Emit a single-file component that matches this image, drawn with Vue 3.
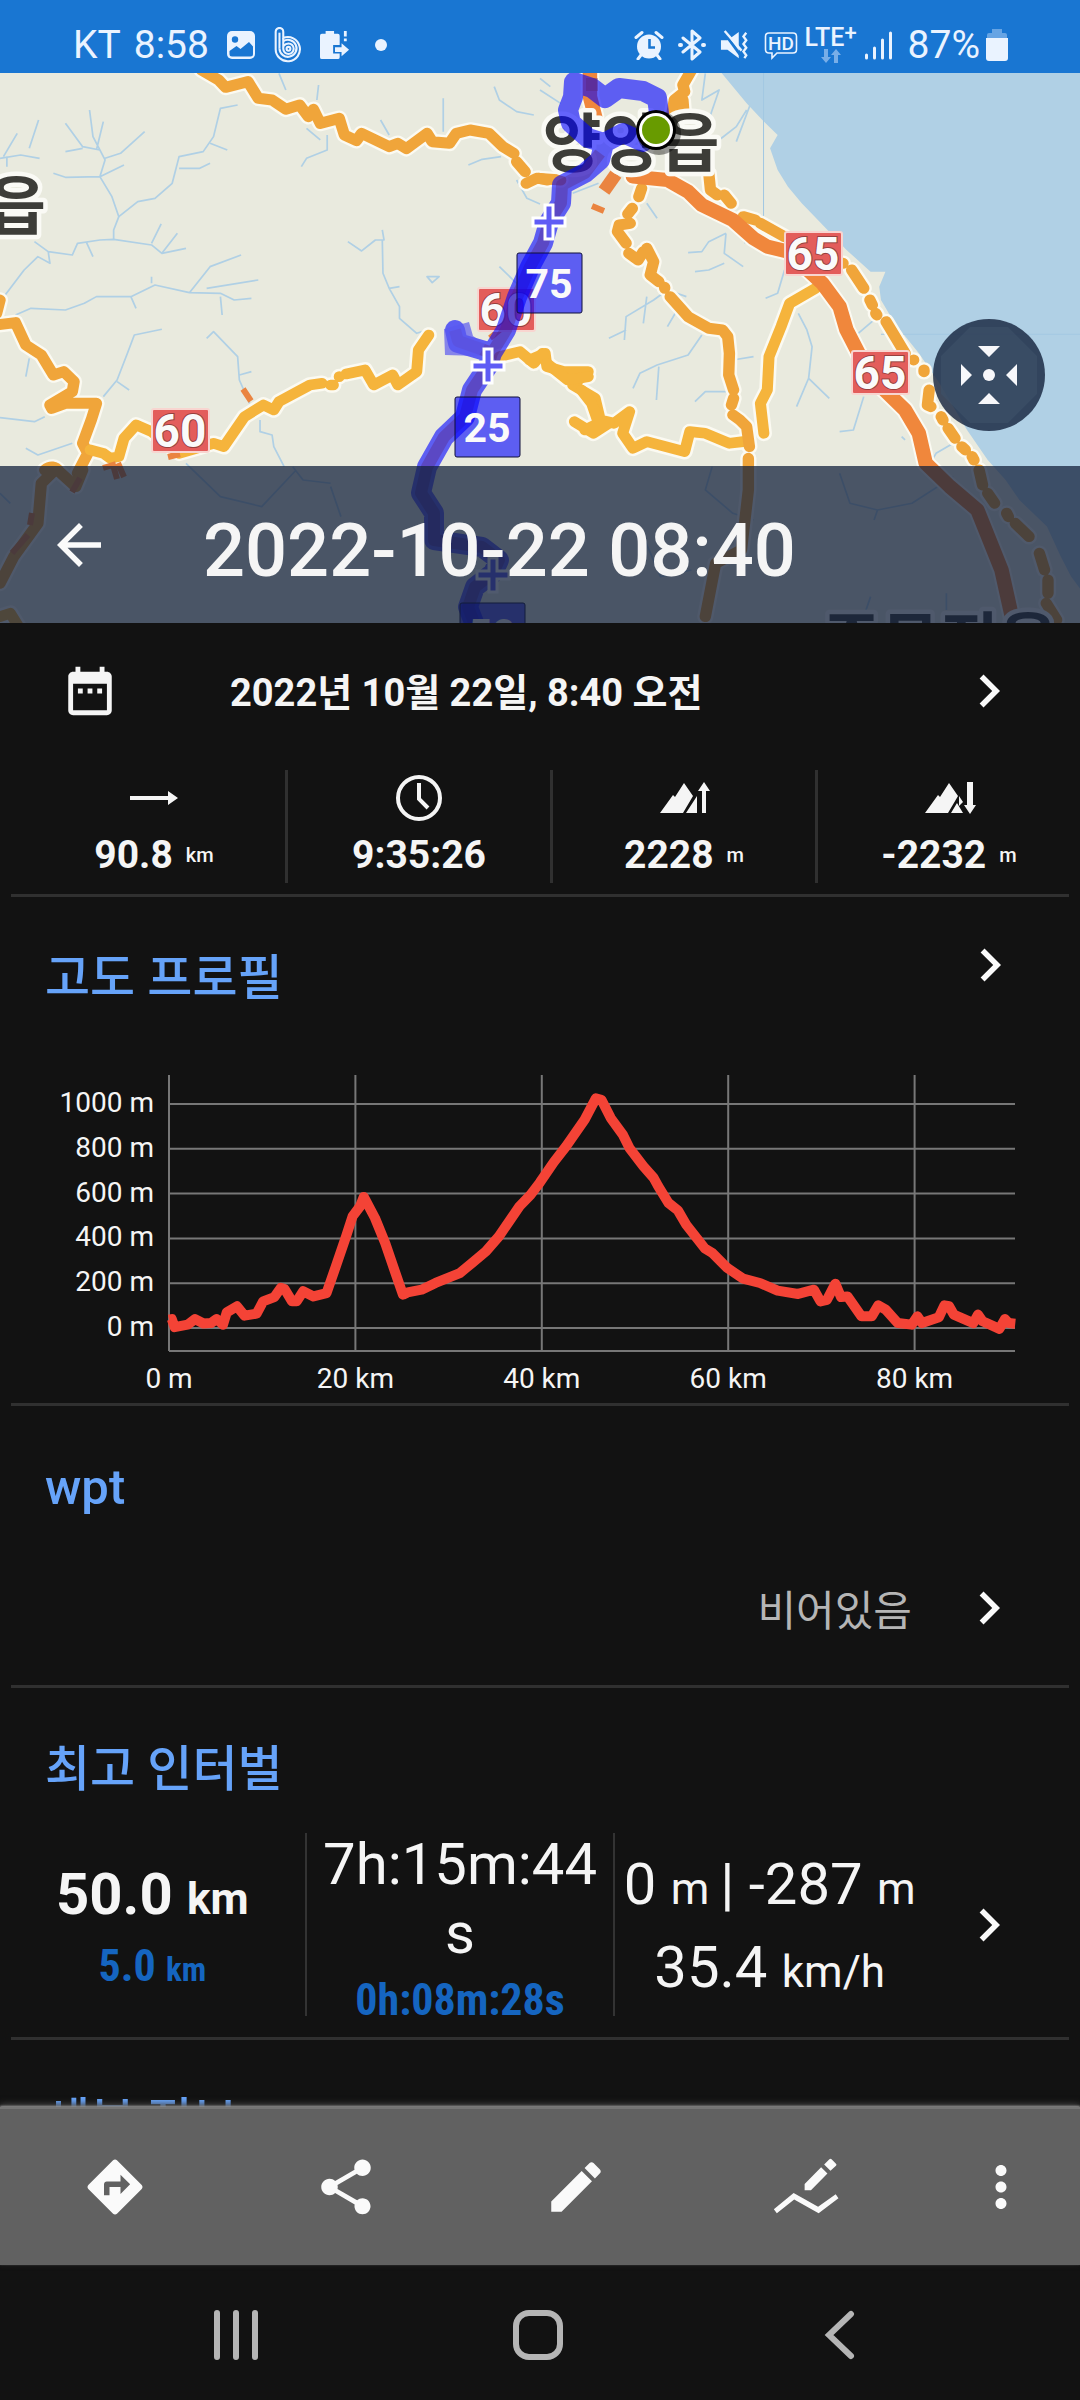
<!-- Track detail screen: map header, stats, elevation profile, intervals -->
<template>
  <div class="screen">
    <div class="status-bar">
      <div class="status-side">
        <span class="status-text">KT</span>
        <span class="status-text clock">8:58</span>
        <svg class="status-icon" viewBox="0 0 30 30" aria-hidden="true">
          <rect x="1" y="1" width="28" height="28" rx="5" fill="#eaf3ff" />
          <circle cx="9" cy="9.500" r="3.200" fill="#1976d2" />
          <path d="M3.500 21l7-5 4 3 8.500-7 4 4.500V24q0 2.500-2.500 2.500H6Q3.500 26.500 3.500 24z" fill="#1976d2" />
        </svg>
        <svg class="status-icon beat" viewBox="0 0 30 38" fill="none" stroke="#eaf3ff" stroke-width="2.200" aria-hidden="true">
          <path d="M2 23V5a4 4 0 0 1 8 0v6.500a12.800 12.800 0 1 1-8 11.500" />
          <path d="M6 23V6" />
          <path d="M10 12v11a5.500 5.500 0 1 0 5.500-5.500q-3 0-5.500 3" />
          <path d="M6 23a9 9 0 1 0 4-8" />
          <circle cx="15.500" cy="23" r="2" />
        </svg>
        <svg class="status-icon" viewBox="0 0 32 32" fill="#eaf3ff" aria-hidden="true">
          <path d="M2 4h4V1h9v3h4q2 0 2 2v10h-7v9h7v4q0 2-2 2H2q-2 0-2-2V6q0-2 2-2z" />
          <path d="M16 18.500h7V14l8 7-8 7v-4.500h-7z" />
          <path d="M25.500 1h3v6h-3zM25.500 9h3v3h-3z" />
        </svg>
        <span class="dot"></span>
      </div>
      <div class="status-side right">
        <svg class="status-icon" viewBox="0 0 30 30" aria-hidden="true">
          <circle cx="15" cy="16.500" r="12" fill="#eaf3ff" />
          <path d="M2 7.500l6-5M28 7.500l-6-5M7 25l-3 4M23 25l3 4" stroke="#eaf3ff" stroke-width="3" stroke-linecap="round" />
          <path d="M15.500 9v8.500H21" fill="none" stroke="#1976d2" stroke-width="2.600" />
        </svg>
        <svg class="status-icon bt" viewBox="0 0 28 32" fill="none" stroke="#eaf3ff" stroke-width="3" stroke-linejoin="round" stroke-linecap="round" aria-hidden="true">
          <path d="M5 9l17 14-8 7V2l8 7L5 23" />
          <path d="M2 16h1M25 16h1" stroke-width="4" />
        </svg>
        <svg class="status-icon" viewBox="0 0 32 30" aria-hidden="true">
          <path d="M1 10h7l12-9v28L8 20H1z" fill="#eaf3ff" />
          <path d="M3 0l19 26" stroke="#1976d2" stroke-width="3" />
          <path d="M5 0l18 21" stroke="#eaf3ff" stroke-width="2.500" />
          <path d="M28 2l-3 4 3 4-3 4 3 4-3 4 3 4-2 3" fill="none" stroke="#eaf3ff" stroke-width="2.500" />
        </svg>
        <svg class="status-icon hd" viewBox="0 0 34 30" aria-hidden="true">
          <path d="M5 3h24q3.500 0 3.500 3.500v13q0 3.500-3.500 3.500H13l-5 5v-5H5q-3.500 0-3.500-3.500v-13Q1.500 3 5 3z" fill="none" stroke="#eaf3ff" stroke-width="1.600" />
          <text x="17" y="20" text-anchor="middle" font-size="19" font-weight="500" fill="#eaf3ff">HD</text>
        </svg>
        <span class="lte">
          <span class="lte-name">LTE<sup>+</sup></span>
          <svg class="lte-arrows" viewBox="0 0 20 14" fill="#78aee8" aria-hidden="true">
            <path d="M3 0h4v8h3l-5 6-5-6h3zM13 14h4V6h3l-5-6-5 6h3z" />
          </svg>
        </span>
        <svg class="status-icon" viewBox="0 0 30 30" stroke="#eaf3ff" stroke-width="3" stroke-linecap="round" aria-hidden="true">
          <path d="M2.500 25v3M10.500 18v10M18.500 10v18M26.500 3v25" />
        </svg>
        <span class="status-text">87%</span>
        <svg class="status-icon battery" viewBox="0 0 22 32" aria-hidden="true">
          <path d="M6 0h10v4h3q2 0 2 2v5H1V6q0-2 2-2h3z" fill="#66a4e4" />
          <path d="M0 9h22v20q0 3-3 3H3q-3 0-3-3z" fill="#eaf3ff" />
        </svg>
      </div>
    </div>

    <header class="hero">
      <svg class="map" viewBox="0 0 1080 550" preserveAspectRatio="xMidYMid slice" role="img" aria-label="지도">
        <rect width="1080" height="550" fill="#e9eade" />
        <g transform="translate(540 -3) scale(.3444 .3333)">
          <path d="M520 0L600 100 655 160 690 195 668 235 690 300 720 350 760 400 830 475 890 540 960 605H1003L985 650 990 690 1030 760 1100 850 1160 940 1240 1080 1300 1170 1352 1230 1392 1290 1472 1370 1512 1460 1542 1520 1600 1600V0z" fill="#b0d0e5" />
          <path d="M649 0V480M990 793H1568" stroke="#a3c8e2" stroke-width="3" />
        </g>
        <g class="river">
          <g transform="translate(0 -3) scale(.3444 .3333)">
            <path v-for="(d, i) in westRivers" :key="i" :d="d" />
          </g>
          <g transform="translate(540 -3) scale(.3444 .3333)">
            <path v-for="(d, i) in eastRivers" :key="i" :d="d" />
          </g>
        </g>
        <g v-for="pass in ['casing', 'fill']" :key="pass" :class="['roads', pass]">
          <g transform="translate(0 -3) scale(.3444 .3333)">
            <path v-for="(r, i) in westRoads" :key="i" :class="r.kind" :d="r.d" />
          </g>
          <g transform="translate(540 -3) scale(.3444 .3333)">
            <path v-for="(r, i) in eastRoads" :key="i" :class="r.kind" :d="r.d" />
          </g>
        </g>
        <g class="stubs">
          <path d="M243 316l8 12M592 133l12 5M168 384l12-3M103 395l10-3 4 14M118 390l6 14M80 405l-8 14M32 440l-2 12M28 462l-16 18M490 265l12-10" />
          <path class="thick" d="M604 118l12-17" />
        </g>

        <g class="place">
          <text x="46" y="156" text-anchor="end">읍</text>
          <text x="631" y="93" text-anchor="middle">양양읍</text>
          <text x="940" y="592" text-anchor="middle">주문진읍</text>
        </g>
        <g v-for="(s, i) in shields" :key="'s' + i">
          <rect :x="s.x" :y="s.y" width="57" height="43" rx="2" class="shield" />
          <text :x="s.x + 28" :y="s.y + 38" class="shield-text">{{ s.text }}</text>
        </g>

        <path class="route" :d="route" />
        <path class="route-core" :d="routeCore" />
        <path d="M444 256l25-7 4 14 12 8-6 12-34-1z" fill="#5a58f0" opacity=".7" />

        <g v-for="(b, i) in kmMarks" :key="'k' + i">
          <path :d="plus(b.px, b.py)" class="plus" />
          <rect :x="b.x" :y="b.y" width="65" height="60" rx="2" class="km-box" />
          <text :x="b.x + 32" :y="b.y + 45" class="km-text">{{ b.text }}</text>
        </g>
        <circle cx="659" cy="60" r="22" fill="#000" opacity=".4" />
        <circle cx="656" cy="57" r="20" fill="#000" />
        <circle cx="656" cy="57" r="17" fill="#fff" />
        <circle cx="656" cy="57" r="14" fill="#689b00" />
      </svg>
      <button class="center-btn" type="button" aria-label="지도 중앙">
        <svg viewBox="0 0 112 112" aria-hidden="true">
          <path d="M37 8h38l29 29v38l-29 29H37L8 75V37z" fill="#3e5169" opacity=".6" />
          <g fill="#f7f7fa">
            <path d="M45 27h22L56 38zM45 85h22L56 74zM28 45v22l11-11zM84 45v22L73 56z" />
            <circle cx="56" cy="56" r="6" />
          </g>
        </svg>
      </button>
      <div class="title-bar">
        <button class="icon-btn" type="button" aria-label="뒤로">
          <svg class="icon" viewBox="0 0 24 24"><path d="M20 11H7.830l5.590-5.590L12 4l-8 8 8 8 1.410-1.410L7.830 13H20v-2z" /></svg>
        </button>
        <h1>2022-10-22 08:40</h1>
      </div>
    </header>

    <main class="content">
      <button class="date-row" type="button">
        <svg class="calendar" viewBox="0 0 24 24" aria-hidden="true">
          <path d="M9 11H7v2h2v-2zm4 0h-2v2h2v-2zm4 0h-2v2h2v-2zm2-7h-1V2h-2v2H8V2H6v2H5c-1.110 0-1.990.9-1.990 2L3 20c0 1.100.890 2 2 2h14c1.100 0 2-.9 2-2V6c0-1.100-.9-2-2-2zm0 16H5V9h14v11z" />
        </svg>
        <span class="date-text">2022년 10월 22일, 8:40 오전</span>
        <svg class="icon" viewBox="0 0 24 24" aria-hidden="true"><path :d="chevron" /></svg>
      </button>

      <div class="stats">
        <div v-for="s in stats" :key="s.icon" class="stat">
          <svg class="stat-icon" viewBox="0 0 48 48" aria-hidden="true">
            <path v-if="s.icon === 'distance'" d="M0 22h38v-5l10 7-10 7v-5H0z" />
            <g v-else-if="s.icon === 'time'" fill="none" stroke="#f5f5f5" stroke-width="4">
              <circle cx="24" cy="24" r="21" />
              <path d="M24 9v16l9 9" />
            </g>
            <g v-else>
              <path d="M0 39l13-18 2 2 9-14 9 13-10 17z" />
              <path v-if="s.icon === 'up'" d="M26 39l11-17v17zM42 39V17h-4l6-9 6 9h-4v22z" />
              <path v-else d="M34 22l4 6-4 4zM26 39l6-10 6 10zM42 8v23h-3l6 9 6-9h-3V8z" />
            </g>
          </svg>
          <div class="stat-value">{{ s.value }}<small v-if="s.unit">{{ s.unit }}</small></div>
        </div>
      </div>

      <section class="profile">
        <div class="section-head">
          <h2>고도 프로필</h2>
          <button class="icon-btn" type="button" aria-label="고도 프로필 열기">
            <svg class="icon" viewBox="0 0 24 24"><path :d="chevron" /></svg>
          </button>
        </div>
        <svg class="chart" viewBox="0 0 1058 342" role="img" aria-label="고도 프로필">
          <g class="grid">
            <path v-for="m in yTicks" :key="'y' + m" :d="`M158 ${yPos(m)}H1004`" />
            <path v-for="km in xTicks" :key="'x' + km" :d="`M${xPos(km)} 14V290`" />
            <path d="M158 290H1004" />
          </g>
          <text v-for="m in yTicks" :key="'yl' + m" x="143" :y="yPos(m) + 8" text-anchor="end">{{ m }} m</text>
          <text v-for="km in xTicks" :key="'xl' + km" :x="xPos(km)" y="327" text-anchor="middle">{{ km ? km + ' km' : '0 m' }}</text>
          <polyline :points="linePoints" class="line" />
        </svg>
      </section>

      <section class="waypoints">
        <div class="section-head"><h2>wpt</h2></div>
        <button class="empty-row" type="button">
          <span>비어있음</span>
          <svg class="icon" viewBox="0 0 24 24" aria-hidden="true"><path :d="chevron" /></svg>
        </button>
      </section>

      <section class="intervals">
        <div class="section-head"><h2>최고 인터벌</h2></div>
        <div class="interval-row">
          <div class="cell">
            <div class="big bold">50.0 <small>km</small></div>
            <div class="sub">5.0 <small>km</small></div>
          </div>
          <div class="cell">
            <div class="big time">7h:15m:44s</div>
            <div class="sub">0h:08m:28s</div>
          </div>
          <div class="cell wide">
            <div class="big">0 <small>m </small>| -287 <small>m</small></div>
            <div class="big">35.4 <small>km/h</small></div>
          </div>
          <button class="icon-btn" type="button" aria-label="최고 인터벌 열기">
            <svg class="icon" viewBox="0 0 24 24"><path :d="chevron" /></svg>
          </button>
        </div>
      </section>

      <section class="details">
        <div class="section-head"><h2>세부 정보</h2></div>
      </section>
    </main>

    <div class="toolbar">
      <button v-for="t in tools" :key="t.label" :class="['tool', { more: t.more }]" type="button" :aria-label="t.label">
        <svg class="icon" viewBox="0 0 24 24" aria-hidden="true"><path :d="t.d" /></svg>
      </button>
    </div>

    <nav class="nav-bar">
      <button type="button" aria-label="최근 앱">
        <svg viewBox="0 0 50 50"><path d="M6 3v44M25 3v44M44 3v44" /></svg>
      </button>
      <button type="button" aria-label="홈">
        <svg viewBox="0 0 50 50"><rect x="3" y="3" width="44" height="44" rx="13" /></svg>
      </button>
      <button type="button" aria-label="뒤로 가기">
        <svg viewBox="0 0 50 50"><path d="M36 4L14 25l22 21" /></svg>
      </button>
    </nav>
  </div>
</template>

<script setup>
const chevron = 'M10 6L8.590 7.410 13.170 12l-4.580 4.590L10 18l6-6z'

const stats = [
  { icon: 'distance', value: '90.8', unit: 'km' },
  { icon: 'time', value: '9:35:26', unit: '' },
  { icon: 'up', value: '2228', unit: 'm' },
  { icon: 'down', value: '-2232', unit: 'm' },
]

const tools = [
  { label: '길찾기', d: 'M21.710 11.290l-9-9c-.39-.39-1.020-.39-1.410 0l-9 9c-.39.39-.39 1.020 0 1.410l9 9c.39.39 1.020.39 1.410 0l9-9c.39-.38.39-1.010 0-1.410zM14 14.500V12h-4v3H8v-4c0-.55.45-1 1-1h5V7.500l3.500 3.500-3.500 3.500z' },
  { label: '공유', d: 'M18 16.080c-.76 0-1.440.3-1.960.77L8.910 12.700c.05-.23.09-.46.09-.7s-.04-.47-.09-.7l7.050-4.110c.54.5 1.250.81 2.040.81 1.660 0 3-1.340 3-3s-1.340-3-3-3-3 1.340-3 3c0 .24.04.47.09.7L8.040 9.810C7.500 9.310 6.790 9 6 9c-1.660 0-3 1.340-3 3s1.340 3 3 3c.79 0 1.500-.31 2.040-.81l7.120 4.160c-.05.21-.08.43-.08.65 0 1.610 1.310 2.920 2.920 2.920s2.920-1.310 2.920-2.920-1.310-2.920-2.920-2.920z' },
  { label: '편집', d: 'M3 17.250V21h3.750L17.810 9.940l-3.750-3.750L3 17.250zM20.710 7.040c.39-.39.39-1.020 0-1.410l-2.340-2.340c-.39-.39-1.020-.39-1.410 0l-1.830 1.830 3.750 3.750 1.830-1.830z' },
  { label: '트랙 편집', d: 'M11.500 10.900V13.200h2.300l6-6.100-2.300-2.300zM22.900 4.300q.4-.4 0-.8L21.300 1.900q-.4-.4-.8 0l-1.900 1.900 2.300 2.300zM.3 20.100L7.500 14.200l8.900 5L22.800 14.600l1 1.500-7.200 5.400-8.900-5L1.400 21.500z' },
  { label: '더보기', more: true, d: 'M12 8c1.100 0 2-.9 2-2s-.9-2-2-2-2 .9-2 2 .9 2 2 2zm0 2c-1.100 0-2 .9-2 2s.9 2 2 2 2-.9 2-2-.9-2-2-2zm0 6c-1.100 0-2 .9-2 2s.9 2 2 2 2-.9 2-2-.9-2-2-2z' },
]

// elevation samples: [km, m]
const samples = [
  [0, 37], [0.3, 40], [0.6, 4], [2, 15], [2.8, 40], [3.7, 20], [4.5, 22], [5.1, 40], [5.8, 15], [6.2, 70],
  [7.3, 97], [8.1, 55], [9.4, 64], [10.1, 119], [11.3, 138], [12, 179], [12.4, 174], [13.2, 119], [13.7, 119],
  [14.4, 164], [15.5, 141], [16.9, 156], [17.9, 275], [19, 409], [19.7, 499], [20.5, 543], [20.9, 585],
  [22.1, 491], [23.2, 379], [24.3, 245], [25.1, 149], [25.6, 159], [27.1, 171], [28.6, 201], [31.2, 245],
  [32.5, 290], [34, 342], [35.4, 409], [36.5, 476], [37.6, 543], [38.8, 595], [39.8, 650], [41.3, 741],
  [42.6, 811], [44.6, 930], [45.8, 1025], [46.4, 1019], [47.4, 937], [48.7, 863], [49.4, 804], [50.9, 722],
  [52, 670], [52.5, 632], [53.6, 558], [54.6, 525], [55.5, 461], [57.5, 355], [58.3, 335], [59.9, 268],
  [61.6, 220], [63.4, 201], [65.3, 167], [67.5, 152], [69.2, 171], [69.9, 119], [70.6, 126], [71.5, 198],
  [72.1, 138], [72.8, 141], [74.3, 52], [75.4, 52], [76.1, 101], [76.9, 82], [78.2, 22], [79.7, 15],
  [80.3, 52], [80.8, 22], [82.6, 48], [83.2, 101], [83.7, 97], [84.2, 60], [86.3, 22], [86.8, 60],
  [87.3, 30], [89.1, -4], [89.7, 40], [90.1, 22], [90.8, 19],
]
const xTicks = [0, 20, 40, 60, 80]
const yTicks = [1000, 800, 600, 400, 200, 0]
const xPos = km => 158 + km * 9.32
const yPos = m => 267 - m * 0.224
const linePoints = samples.map(([km, m]) => `${xPos(km)},${yPos(m)}`).join(' ')

const shields = [
  { x: 152, y: 336, text: '60' },
  { x: 478, y: 215, text: '60' },
  { x: 785, y: 159, text: '65' },
  { x: 852, y: 278, text: '65' },
]
const kmMarks = [
  { text: '75', x: 517, y: 180, px: 549, py: 149 },
  { text: '25', x: 455, y: 324, px: 488, py: 293 },
  { text: '50', x: 460, y: 530, px: 493, py: 502 },
]
const plus = (x, y) => `M${x - 16} ${y - 4}h12v-13h8v13h12v8h-12v13h-8v-13h-12z`

const route = 'M656 57L659 40 657 25 643 18 619 15 605 25 592 15 574 9 573 24 568 37 571 50 588 65 604 70 623 60 643 69 656 57M604 70L600 87 585 100 562 112 561 130 549 149 543 170 530 194 517 224 506 257 492 280 458 270 455 257M492 280L488 293 472 317 465 344 444 364 427 394 421 420 434 440 434 467 482 474 499 487 493 500 475 514 468 534 475 552'
const routeCore = 'M592 5L592 18M600 80L585 100 562 112 561 130 549 149 543 170 530 194 517 224 506 257 492 280 458 268 455 257M492 280L488 293 472 317 465 344 444 364 427 394 421 420 434 440 434 467 482 474 499 487 493 500 475 514 468 534 475 552'

const westRoads = [
  { kind: 'primary', d: 'M585 0L635 30 655 52 720 35 750 85 790 90 830 118 870 105 895 140 910 118 930 160 985 145 1000 195 1035 212 1050 190 1130 230 1155 220 1180 236 1240 190 1255 215 1305 220 1325 190 1365 180 1420 190 1460 230 1492 250' },
  { kind: 'primary', d: 'M1500 275L1525 305M1565 325L1590 330' },
  { kind: 'primary', d: 'M-10 730L0 690M-10 765L45 758 75 825 120 855 155 915 185 905 215 935 210 965 145 1005 150 1015 190 1000 280 1000 265 1050 240 1120 255 1150 225 1210' },
  { kind: 'primary', d: 'M130 1200Q155 1180 172 1205L220 1250 240 1200M160 1200L120 1240 110 1360 40 1460 0 1540' },
  { kind: 'secondary', d: 'M262 1140L300 1150 320 1165 345 1160 360 1105 395 1065 440 1085 520 1150 620 1120 650 1130 710 1040 765 1005 795 1020 810 995 900 945 935 940' },
  { kind: 'secondary', d: 'M960 945L968 945M985 920L985 920M1005 912L1060 900 1085 945 1140 915 1155 945 1210 905 1215 840 1245 795' },
  { kind: 'secondary', d: 'M1450 860L1510 845 1550 880 1575 850' },
  { kind: 'secondary', d: 'M0 1640L30 1630 60 1680' },
]
const eastRoads = [
  { kind: 'secondary', d: 'M-30 870L15 850 20 890 70 905 140 905 95 945 160 985 175 1050 215 1060 260 1025 240 1090 270 1135 310 1115 420 1145 435 1085 480 1090 550 1120 590 1115' },
  { kind: 'secondary', d: 'M20 880L80 930 140 920M120 960L150 1000 170 1060 130 1080M100 1055L155 1090 200 1060M650 1090L640 1000 660 960 665 860 700 770 725 700 800 655' },
  { kind: 'primary', d: 'M440 0L415 45 420 65 390 90 380 150M415 90L418 130M490 310L495 360 515 375M535 375L555 400M590 440L625 450M640 460L710 500' },
  { kind: 'primary', d: 'M-40 340L-10 325 60 330' },
  { kind: 'primary', d: 'M295 355L287 380M268 415L255 432M262 460L230 465 225 485 250 520M258 550L285 570 300 545M310 535L330 575 320 615 345 635M362 652L362 655M378 680L430 740 490 775 530 780 545 800 550 850 548 915 562 960M562 985L556 1005M560 1035L580 1050 600 1070 608 1130M605 1165L605 1260 585 1440 510 1480 480 1640' },
  { kind: 'primary', d: 'M880 580L880 580M905 600L940 655M958 690L965 705M975 730L978 735M1005 755L1060 850M1085 870L1085 870M1115 900L1115 905M1130 960L1125 1005 1135 1010M1165 1040L1170 1050M1185 1075L1205 1105M1225 1130L1235 1140M1255 1160L1260 1170M1275 1200L1285 1245M1300 1270L1320 1300M1355 1330L1360 1340M1380 1360L1420 1400M1450 1450L1465 1500M1475 1530L1475 1570M1470 1600L1500 1650' },
  { kind: 'motorway', d: 'M145 0L145 80 160 140M270 320L370 330 430 365 470 405 560 450 620 505 660 530 720 545 820 640 870 710 890 780 930 860 990 950 1060 1020 1100 1090 1120 1180 1190 1250 1270 1320 1340 1500 1370 1640' },
]
const westRivers = [
  'M0 265L60 255 115 265M10 260L50 190M85 235L112 150M260 120L270 200 305 270 290 320 325 380 345 440 330 480V508M190 160L240 230 290 240M300 155L280 240M190 245L240 235M420 185L350 250 305 265M155 310L190 322 290 320 360 285',
  'M690 105L640 115 620 200 590 245 520 260 500 340 450 385 400 395 345 440M610 220L660 240M520 295L580 295 610 280M20 290V260',
  'M15 675L70 600 110 560 145 580 140 545 210 555 225 520 290 510 330 508 440 525 470 550 540 535M440 520L468 462M470 550L515 490M100 515L140 545M270 560L250 515',
  'M45 735L90 715 190 720 245 700 280 680 380 680 450 645 550 668 640 670 680 690 730 685M550 668L610 590 700 555M600 655L750 630M440 640V620M380 680L395 715M645 735L640 680',
  'M1010 515L1050 543 1090 510H1115L1110 480M1110 510L1112 610 1130 655 1160 710V745L1210 790 1240 780M1130 655L1160 650M1240 620L1275 620 1255 638z',
  'M470 778L390 795 370 850 340 930 300 980M340 935L375 960M600 805L620 785 690 860 695 930 725 1000M695 915L730 905M825 1190L795 1130 790 1095 755 1085 755 1050M0 1043L100 1055 130 1040M75 1135L110 1155 210 1120M85 865L75 920',
  'M810 10L830 60M925 45L920 90M1287 85V185M1105 150L1130 195M950 195V240L890 265 875 290M890 175L930 210M1435 50L1450 90 1500 125 1550 135M1360 285L1400 268 1455 260M1500 330L1530 385 1568 402M1450 590L1500 640',
  'M540 1180L640 1280 760 1310 860 1200M960 1250L990 1340M850 1190L880 1230 960 1240M0 1270L30 1300',
]
const eastRivers = [
  'M480 10L470 90 520 60 480 180M600 120L570 170 520 210M610 105L570 215M0 60L60 100M0 25L30 50M95 370L170 340',
  'M540 490L490 515 470 545 430 548M540 490L535 550 590 590M535 580L490 600 450 605M710 600L690 670 655 685M590 455L595 520M310 400L340 445',
  'M425 680L370 660 330 690 250 740 245 810M310 680L300 760M200 805L250 780M470 795L430 855 340 885 290 910 270 955M345 890L338 990M415 690L370 770M620 860L560 870 530 900M545 965L480 965 450 995',
  'M750 730L775 780 790 830 780 925 745 1010M780 925L840 985M890 820L970 750M940 980L910 1080 870 1085M1050 1100L1060 1110M1200 1120L1150 1150 1130 1185',
  'M500 1190L480 1260 560 1330 620 1350M870 1210L900 1300 980 1320 1080 1300 1200 1220M980 1320L970 1350M300 1400L350 1520 440 1500M960 1580L940 1640M1180 1570V1620',
]
</script>

<style>
body { background: #121212; }
</style>

<style scoped>
.screen {
  display: flex; flex-direction: column; height: 100vh; overflow: hidden;
  background: #121212; color: #f5f5f5;
  font-family: Roboto, "Noto Sans CJK KR", sans-serif;
}
button { border: 0; padding: 0; background: none; color: inherit; font: inherit; cursor: pointer; }
h1, h2 { margin: 0; font-weight: 500; }
svg { display: block; flex: none; }
.icon { width: 66px; height: 66px; fill: #fafafa; }

.status-bar {
  display: flex; justify-content: space-between; align-items: center; flex: none;
  height: 73px; padding: 16px 72px 0 73px; box-sizing: border-box;
  background: #1976d2; color: #eaf3ff;
}
.status-side { display: flex; align-items: center; gap: 17px; }
.status-side.right { gap: 14px; }
.status-text { font-size: 39px; line-height: 44px; }
.clock { margin-left: -4px; }
.status-icon { width: 30px; height: 30px; }
.beat { height: 36px; }
.hd { width: 34px; }
.bt { width: 28px; height: 32px; }
.dot { width: 12px; height: 12px; border-radius: 50%; margin-left: 8px; background: #eaf3ff; }
.lte { display: flex; flex-direction: column; align-items: center; margin: 0 -7px; }
.lte-name { font-size: 25px; line-height: 22px; font-weight: 500; }
.lte-name sup { font-size: 22px; line-height: 12px; vertical-align: 6px; }
.lte-arrows { width: 20px; height: 14px; }
.battery { width: 22px; height: 32px; margin-left: -8px; }

.hero { position: relative; flex: none; }
.map { width: 100%; height: 550px; }
.river path { fill: none; stroke: #b0d0e5; stroke-width: 5; stroke-linejoin: round; }
.roads path { fill: none; stroke-linejoin: round; stroke-linecap: round; }
.casing path { stroke: #fbfaf2; stroke-width: 47; }
.casing .motorway { stroke-width: 54; }
.fill .primary { stroke: #f0a53a; stroke-width: 33; }
.fill .secondary { stroke: #f5b43c; stroke-width: 32; }
.fill .motorway { stroke: #f0873c; stroke-width: 42; }
.stubs path { fill: none; stroke: #ea8440; stroke-width: 6; }
.stubs .thick { stroke-width: 13; }
.place text {
  font-size: 64px; font-weight: 700; fill: #3d3d38;
  stroke: #fafaf5; stroke-width: 9; paint-order: stroke; stroke-linejoin: round;
}
.shield { fill: #e35d5b; stroke: #f8d5d0; stroke-width: 2; }
.shield-text, .km-text { font-size: 46px; font-weight: 700; text-anchor: middle; fill: #fafafa; }
.shield-text { stroke: #96403e; stroke-width: 2; paint-order: stroke; }
.km-text { font-size: 41px; }
.route { fill: none; stroke: #00f; stroke-width: 20; stroke-linejoin: round; stroke-linecap: round; opacity: .6; }
.route-core { fill: none; stroke: #5a2070; stroke-width: 12; stroke-linejoin: round; opacity: .35; }
.plus { fill: #5f5cf5; stroke: #fff; stroke-width: 3; }
.km-box { fill: #00f; fill-opacity: .6; stroke: #11113a; stroke-width: 1; }

.center-btn {
  position: absolute; right: 35px; top: 246px; width: 112px; height: 112px;
  border-radius: 50%; background: rgba(19, 33, 59, .8);
}
.title-bar {
  position: absolute; left: 0; right: 0; bottom: 0; height: 157px; box-sizing: border-box;
  display: flex; align-items: center; gap: 91px; padding: 8px 46px;
  background: rgba(19, 33, 59, .74);
}
.title-bar h1 { font-size: 74px; line-height: 88px; padding-top: 12px; }

.content { flex: 1; min-height: 0; overflow: hidden; }
.date-row {
  display: flex; align-items: center; width: 100%; height: 136px; padding: 0 58px 0 61px;
  text-align: left;
}
.calendar { width: 58px; height: 58px; fill: #f5f5f5; }
.date-text { flex: 1; padding: 0 0 4px 111px; font-size: 38px; font-weight: 700; }

.stats { display: grid; grid-template-columns: repeat(4, 1fr); margin-top: 11px; padding-left: 20px; }
.stat { display: flex; flex-direction: column; align-items: center; gap: 9px; height: 113px; padding-left: 3px; }
.stat + .stat { border-left: 3px solid #303030; padding-left: 0; }
.stat-icon { width: 48px; height: 48px; margin-top: 4px; fill: #f5f5f5; overflow: visible; }
.stat-value { font-size: 39px; line-height: 48px; font-weight: 700; }
.stat-value small { margin-left: 13px; font-size: 20px; font-weight: 500; vertical-align: 6px; }

section { margin: 0 11px; border-top: 3px solid #303030; }
.profile { margin-top: 11px; }
.section-head { display: flex; justify-content: space-between; padding: 35px 46px 0 34px; height: 130px; box-sizing: border-box; }
.section-head h2 { font-size: 49px; line-height: 94px; color: #66a3f9; }
.section-head .icon-btn { align-self: flex-start; }
.chart { width: 100%; height: auto; margin-top: 34px; }
.chart text { font-size: 28px; fill: #f5f5f5; }
.grid path { stroke: #777; stroke-width: 2; fill: none; }
.line { fill: none; stroke: #f44336; stroke-width: 10; stroke-linejoin: round; }

.empty-row {
  display: flex; align-items: center; justify-content: flex-end; gap: 44px;
  width: 100%; height: 149px; padding: 0 47px 6px; font-size: 42px; color: #b5b5b5;
}

.interval-row { display: flex; align-items: center; height: 219px; padding: 0 47px 6px 0; box-sizing: border-box; }
.interval-row .icon-btn { margin-left: 32px; }
.cell {
  flex: 308 1 0; min-width: 0; height: 183px; padding-top: 8px; display: flex; flex-direction: column;
  align-items: center; justify-content: center; box-sizing: border-box; text-align: center;
}
.cell:first-child { flex-grow: 284; padding-right: 11px; }
.cell + .cell { border-left: 2px solid #333; }
.cell.wide { flex-grow: 310; }
.big { font-size: 58px; line-height: 69px; white-space: nowrap; }
.big.time { white-space: normal; overflow-wrap: anywhere; padding: 0 14px; }
.big small { font-size: 44px; }
.bold { font-weight: 700; }
.wide .big + .big { margin-top: 9px; }
.sub { margin-top: 4px; font-family: "Roboto Condensed", Roboto, sans-serif; font-size: 44px; line-height: 56px; font-weight: 700; color: #1565c0; }
.sub small { font-size: 33px; }

.toolbar {
  position: relative; display: flex; align-items: center; flex: none; height: 158px;
  background: #616161; border-top: 2px solid #757575; box-sizing: border-box;
  box-shadow: 0 -1px 2px #999, 0 -3px 6px #444;
}
.tool { flex: 230 1 0; display: flex; justify-content: center; }
.tool.more { flex-grow: 158; }

.nav-bar {
  display: flex; justify-content: center; gap: 252px; align-items: center; flex: none;
  height: 135px; padding: 4px 4px 0 0; box-sizing: border-box;
}
.nav-bar svg { width: 50px; height: 50px; fill: none; stroke: #b5b5b5; stroke-width: 6; stroke-linecap: round; }
</style>
